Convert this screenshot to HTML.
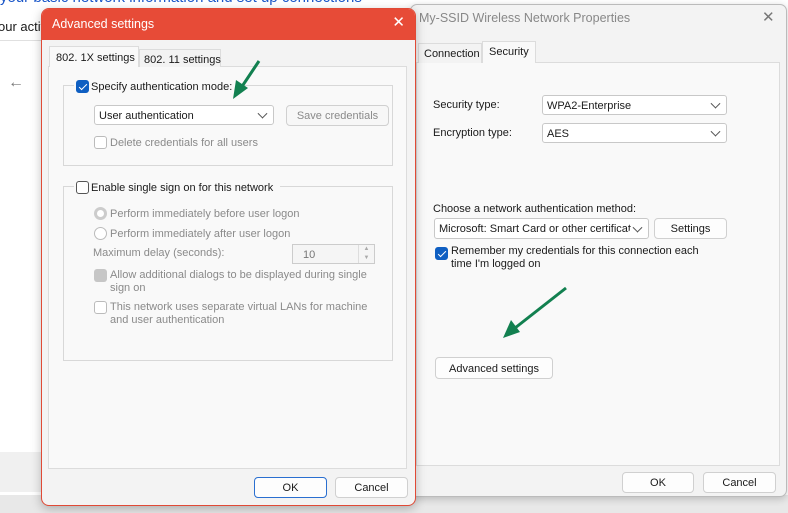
<!DOCTYPE html>
<html><head><style>
*{box-sizing:border-box;margin:0;padding:0}
body{width:788px;height:513px;overflow:hidden;background:#fff;font-family:"Liberation Sans",sans-serif;font-size:11px;line-height:14px;color:#1a1a1a;position:relative}
.a{position:absolute;white-space:nowrap}
.sel{position:absolute;background:#fff;border:1px solid #c8c8c8;border-radius:3px;padding:2px 4px;white-space:nowrap;overflow:hidden}
.sel::after{content:"";position:absolute;right:7px;top:50%;width:6px;height:6px;border-right:1px solid #555;border-bottom:1px solid #555;transform:translateY(-70%) rotate(45deg);background:#fff;box-shadow:3px 3px 0 3px #fff}
.btn{position:absolute;background:#fdfdfd;border:1px solid #d0d0d0;border-radius:4px;text-align:center;white-space:nowrap}
.cb{position:absolute;width:13px;height:13px;border:1px solid #555;border-radius:3px;background:#fff}
.cb.on{background:#0f5fc2;border-color:#0f5fc2}
.cb.on::after{content:"";position:absolute;left:4px;top:1px;width:3px;height:7px;border-right:1.5px solid #fff;border-bottom:1.5px solid #fff;transform:rotate(45deg)}
.g{color:#8a8a8a}
.grp{position:absolute;border:1px solid #d8d8d8}
</style></head><body>
<div class="a" style="left:0;top:-11px;color:#1a56c8;font-size:15px;line-height:18px">your basic network information and set up connections</div>
<div class="a" style="left:-2px;top:20px;font-size:13px">our activ</div>
<div class="a" style="left:0;top:40px;width:50px;height:420px;border:1px solid #e0e0e0;border-left:none;border-radius:0 8px 8px 0;background:#fff"></div>
<div class="a" style="left:0;top:452px;width:50px;height:40px;background:#f0f0f0"></div>
<div class="a" style="left:8px;top:76px;color:#777;font-size:16px">←</div>
<div class="a" style="left:0;top:495px;width:788px;height:18px;background:#e8e8e8"></div>

<!-- Properties dialog -->
<div class="a" style="left:410px;top:4px;width:377px;height:493px;background:#f3f3f3;border:1px solid #bbb;border-radius:7px;box-shadow:0 2px 8px rgba(0,0,0,.2)"></div>
<div class="a" style="left:419px;top:11px;color:#888;font-size:12.5px">My-SSID Wireless Network Properties</div>
<div class="a" style="left:762px;top:11px;color:#777;font-size:15px;font-weight:300">✕</div>
<div class="a" style="left:416px;top:62px;width:364px;height:404px;background:#f9f9f9;border:1px solid #dcdcdc"></div>
<div class="a" style="left:418px;top:43px;width:64px;height:20px;border:1px solid #dcdcdc;border-bottom:none;background:#f3f3f3;padding:3px 0 0 5px">Connection</div>
<div class="a" style="left:482px;top:41px;width:54px;height:22px;border:1px solid #dcdcdc;border-bottom:none;background:#f9f9f9;padding:3px 0 0 6px">Security</div>
<div class="a" style="left:433px;top:98px">Security type:</div>
<div class="sel" style="left:542px;top:95px;width:185px;height:20px;padding-top:3px">WPA2-Enterprise</div>
<div class="a" style="left:433px;top:126px">Encryption type:</div>
<div class="sel" style="left:542px;top:123px;width:185px;height:20px;padding-top:3px">AES</div>
<div class="a" style="left:433px;top:202px">Choose a network authentication method:</div>
<div class="sel" style="left:434px;top:218px;width:215px;height:21px;padding-top:3px">Microsoft: Smart Card or other certificat</div>
<div class="btn" style="left:654px;top:218px;width:73px;height:21px;padding-top:3px">Settings</div>
<div class="cb on" style="left:435px;top:247px"></div>
<div class="a" style="left:451px;top:245px;line-height:13px">Remember my credentials for this connection each<br>time I'm logged on</div>
<div class="btn" style="left:435px;top:357px;width:118px;height:22px;padding-top:4px">Advanced settings</div>
<div class="btn" style="left:622px;top:472px;width:72px;height:21px;padding-top:3px">OK</div>
<div class="btn" style="left:703px;top:472px;width:73px;height:21px;padding-top:3px">Cancel</div>

<!-- Advanced dialog -->
<div class="a" style="left:41px;top:8px;width:375px;height:498px;background:#f3f3f3;border:1px solid #e04a36;border-radius:8px;box-shadow:0 3px 10px rgba(0,0,0,.25);overflow:hidden">
<div style="height:31px;background:#e74b37;color:#fff;font-size:12.5px;padding:8px 0 0 10px">Advanced settings<span style="position:absolute;right:10px;top:7px;font-size:15px">✕</span></div>
</div>
<div class="a" style="left:48px;top:66px;width:359px;height:403px;background:#f9f9f9;border:1px solid #dcdcdc"></div>
<div class="a" style="left:49px;top:46px;width:90px;height:21px;border:1px solid #dcdcdc;border-bottom:none;background:#f9f9f9;padding:4px 0 0 6px">802. 1X settings</div>
<div class="a" style="left:139px;top:49px;width:82px;height:18px;border:1px solid #dcdcdc;border-bottom:none;background:#f3f3f3;padding:3px 0 0 4px">802. 11 settings</div>

<div class="grp" style="left:63px;top:85px;width:330px;height:81px"></div>
<div class="a" style="left:74px;top:78px;width:166px;background:#f9f9f9;height:16px"></div>
<div class="cb on" style="left:76px;top:80px"></div>
<div class="a" style="left:91px;top:80px">Specify authentication mode:</div>
<div class="sel" style="left:94px;top:105px;width:180px;height:20px;padding-top:3px">User authentication</div>
<div class="btn g" style="left:286px;top:105px;width:103px;height:21px;padding-top:3px;background:#f7f7f7">Save credentials</div>
<div class="cb" style="left:94px;top:136px;border-color:#bbb"></div>
<div class="a g" style="left:110px;top:136px">Delete credentials for all users</div>

<div class="grp" style="left:63px;top:186px;width:330px;height:175px"></div>
<div class="a" style="left:74px;top:179px;width:206px;background:#f9f9f9;height:16px"></div>
<div class="cb" style="left:76px;top:181px"></div>
<div class="a" style="left:91px;top:181px">Enable single sign on for this network</div>
<div class="a" style="left:94px;top:207px;width:13px;height:13px;border-radius:50%;background:#ccc;border:3px solid #ccc"><div style="width:7px;height:7px;border-radius:50%;background:#fff"></div></div>
<div class="a g" style="left:110px;top:207px">Perform immediately before user logon</div>
<div class="a" style="left:94px;top:227px;width:13px;height:13px;border-radius:50%;border:1px solid #bbb;background:#fff"></div>
<div class="a g" style="left:110px;top:227px">Perform immediately after user logon</div>
<div class="a g" style="left:93px;top:246px">Maximum delay (seconds):</div>
<div class="a" style="left:292px;top:244px;width:83px;height:20px;border:1px solid #ccc;background:#f5f5f5;padding:3px 0 0 10px;color:#777">10</div>
<div class="a" style="left:358px;top:245px;width:16px;height:18px;border-left:1px solid #ddd;color:#aaa;font-size:6px;text-align:center;line-height:9px">▲<br>▼</div>
<div class="a" style="left:94px;top:269px;width:13px;height:13px;border-radius:3px;background:#c6c6c6"></div>
<div class="a g" style="left:110px;top:269px;line-height:13px">Allow additional dialogs to be displayed during single<br>sign on</div>
<div class="cb" style="left:94px;top:301px;border-color:#bbb"></div>
<div class="a g" style="left:110px;top:301px;line-height:13px">This network uses separate virtual LANs for machine<br>and user authentication</div>

<div class="btn" style="left:254px;top:477px;width:73px;height:21px;padding-top:3px;border:1px solid #2a6fd0">OK</div>
<div class="btn" style="left:335px;top:477px;width:73px;height:21px;padding-top:3px">Cancel</div>

<svg class="a" style="left:0;top:0" width="788" height="513">
<g stroke="#128050" stroke-width="3" fill="#128050">
<line x1="259" y1="61" x2="241" y2="88"/>
<polygon points="233,99 236,80 248,88" stroke="none"/>
<line x1="566" y1="288" x2="515" y2="328"/>
<polygon points="503,338 511,320 520,332" stroke="none"/>
</g></svg>
</body></html>
